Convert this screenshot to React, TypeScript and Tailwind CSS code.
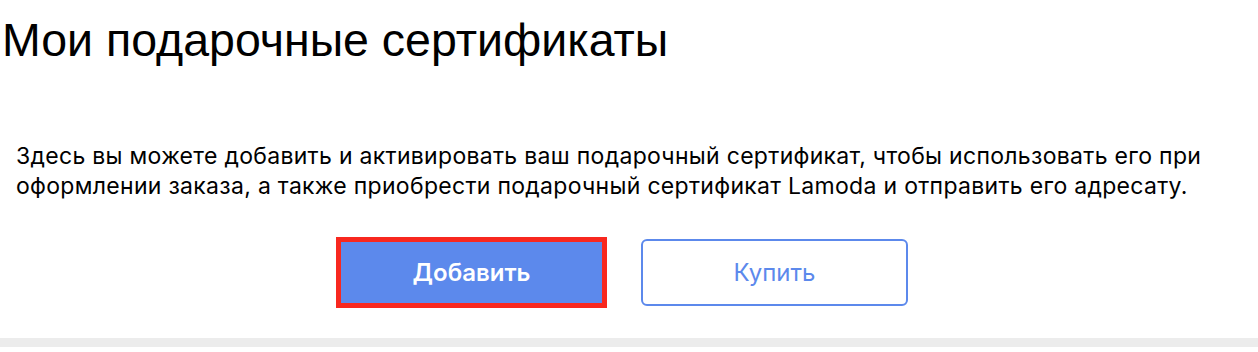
export default function App() {
  return (
    <div className="w-[1258px] h-[352px] bg-white flex flex-col text-black">
      <h1 className="pl-[2px] pt-[12px] text-[46.5px] leading-[56px] font-normal font-['Liberation_Sans',Arial,sans-serif]">
        Мои подарочные сертификаты
      </h1>

      <p className="mt-[73px] px-4 text-[23px] tracking-[0.3px] leading-[30px] font-['Inter',sans-serif]">
        Здесь вы можете добавить и активировать ваш подарочный сертификат, чтобы использовать его при
        оформлении заказа, а также приобрести подарочный сертификат Lamoda и отправить его адресату.
      </p>

      <div className="mt-[38px] flex justify-center gap-[36px] pr-[12px] font-['Inter',sans-serif]">
        <button
          type="button"
          className="w-[267px] h-[67px] bg-[#5c89ec] text-white text-[24px] font-semibold outline-[5px] outline-solid outline-[#f8281f] -outline-offset-[3px]"
        >
          Добавить
        </button>
        <button
          type="button"
          className="w-[267px] h-[67px] rounded-md border-2 border-[#5c89ec] bg-white text-[#5c89ec] text-[24px]"
        >
          Купить
        </button>
      </div>

      <div className="mt-[32px] h-[9px] bg-[#ececec]" />
    </div>
  );
}
